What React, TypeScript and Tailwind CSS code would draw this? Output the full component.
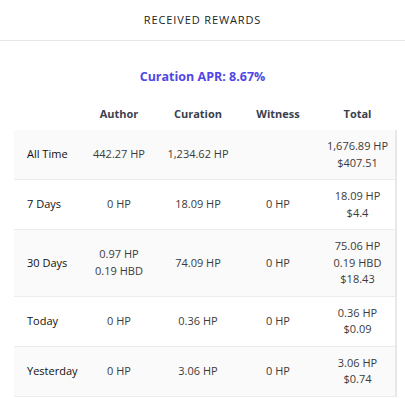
import React from "react";

type Row = { label: string; author: string[]; curation: string[]; witness: string[]; total: string[] };

const rows: Row[] = [
  { label: "All Time", author: ["442.27 HP"], curation: ["1,234.62 HP"], witness: [], total: ["1,676.89 HP", "$407.51"] },
  { label: "7 Days", author: ["0 HP"], curation: ["18.09 HP"], witness: ["0 HP"], total: ["18.09 HP", "$4.4"] },
  { label: "30 Days", author: ["0.97 HP", "0.19 HBD"], curation: ["74.09 HP"], witness: ["0 HP"], total: ["75.06 HP", "0.19 HBD", "$18.43"] },
  { label: "Today", author: ["0 HP"], curation: ["0.36 HP"], witness: ["0 HP"], total: ["0.36 HP", "$0.09"] },
  { label: "Yesterday", author: ["0 HP"], curation: ["3.06 HP"], witness: ["0 HP"], total: ["3.06 HP", "$0.74"] },
];

const grid = "grid grid-cols-[66px_78px_80px_80px_79px]";

function Cell({ lines }: { lines: string[] }) {
  return (
    <div className="flex flex-col items-center justify-center text-center">
      {lines.map((l, i) => (
        <span key={i}>{l}</span>
      ))}
    </div>
  );
}

export default function App() {
  return (
    <div
      className="w-[405px] h-[398px] bg-white overflow-hidden"
      style={{ fontFamily: '"Open Sans", "Noto Sans", sans-serif' }}
    >
      <div className="h-[41px] border-b border-[#e5e7eb] flex items-center justify-center">
        <span className="text-[11px] tracking-[0.08em] text-[#222] uppercase">Received Rewards</span>
      </div>
      <div className="flex justify-center pt-[26px] h-[57px]">
        <span className="text-[12.5px] font-bold text-[#5146e6] leading-[20px]">Curation APR: 8.67%</span>
      </div>
      <div className="ml-[14px] w-[383px]">
        <div className={`${grid} h-[32px] items-center text-[11px] font-bold text-[#3a3f4e]`}>
          <div />
          <div className="text-center">Author</div>
          <div className="text-center">Curation</div>
          <div className="text-center">Witness</div>
          <div className="text-center">Total</div>
        </div>
        <div className="border-r-2 border-[#e8e8ea]">
          {rows.map((r, i) => (
            <div
              key={r.label}
              className={`${grid} py-2 border-b border-[#ececee] text-[11px] leading-[16.5px] text-[#3b3b3b] ${
                i % 2 === 0 ? "bg-[#fafafa]" : "bg-white"
              }`}
            >
              <div className="flex items-center pl-[13px] text-[#111]">{r.label}</div>
              <Cell lines={r.author} />
              <Cell lines={r.curation} />
              <Cell lines={r.witness} />
              <Cell lines={r.total} />
            </div>
          ))}
        </div>
      </div>
    </div>
  );
}
